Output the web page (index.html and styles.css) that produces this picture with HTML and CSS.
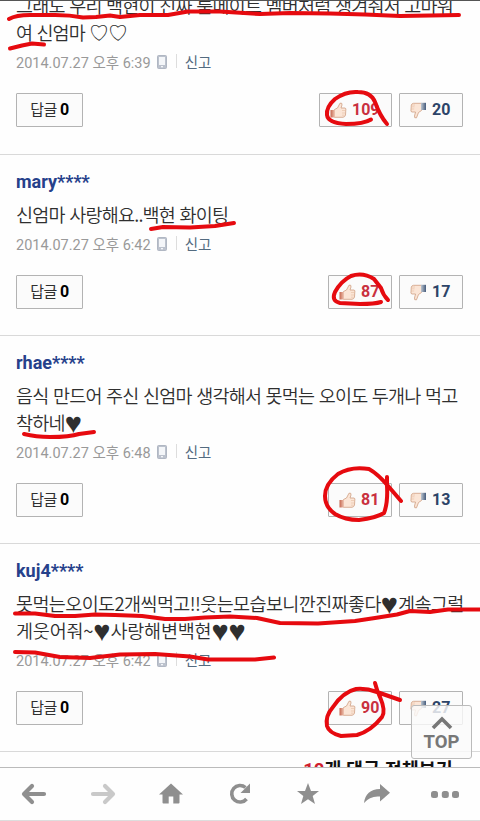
FILE: index.html
```html
<!DOCTYPE html>
<html lang="ko">
<head>
    <meta charset="utf-8">
    <title>댓글</title>
    <link rel="stylesheet" href="styles.css">
</head>
<body>
    <svg class="symbols" aria-hidden="true">
        <defs>
            <linearGradient id="cuffRed"><stop offset="0" stop-color="#c5654e"/><stop offset="1" stop-color="#efc7b4"/></linearGradient>
            <linearGradient id="cuffBlue"><stop offset="0" stop-color="#bdc6d0"/><stop offset="1" stop-color="#455b7c"/></linearGradient>
            <symbol id="up" viewBox="0 0 17 17">
                <path d="M4.500 7.500L7.500 6L10 1.200Q12.500.500 12 3L11 6H15Q16.500 6.500 15.800 8L15.500 13Q15 15 13 15.300H4.500Z" fill="#fbe5d6" stroke="#cfa083" stroke-width=".8"/>
                <path d="M12 8.500h3.500M12 11h3.300M12 13.200h2.500" stroke="#e5bda3" stroke-width=".6"/>
                <path d="M.5 8H5V15.500H.5Z" fill="url(#cuffRed)"/>
            </symbol>
            <symbol id="down" viewBox="0 0 17 17">
                <path d="M11.500 8.500L8.500 10.500L6.500 15.800Q4 16.500 4.500 14L5.500 10H2Q.400 9.500 1 8L1.300 3Q2 1.300 3.500 1.300H11.500Z" fill="#fbe5d6" stroke="#cfa083" stroke-width=".8"/>
                <path d="M1.200 7h3M1.500 4.800h3M2 3h3" stroke="#e5bda3" stroke-width=".6"/>
                <path d="M11 .8H16V8H11Z" fill="url(#cuffBlue)"/>
            </symbol>
            <symbol id="phone" viewBox="0 0 10 14">
                <rect x=".5" y=".5" width="9" height="13" rx="1" fill="#bcc2cd" stroke="#b0b7c3"/>
                <rect x="2" y="2" width="6" height="8" fill="#f4f6f9"/>
                <rect x="4" y="11" width="2" height="1.300" fill="#f4f6f9"/>
            </symbol>
        </defs>
    </svg>

    <main class="comments">
        <article class="comment first">
            <p class="text"><span class="spaced">그래도 우리 백현이 진짜 룸메이트 멤버처럼 챙겨줘서 고마워</span><br>여 신엄마 <span class="heart-line">♡♡</span></p>
            <div class="meta"><span class="date">2014.07.27 오후 6:39</span><svg class="phone"><use href="#phone"/></svg><a class="report">신고</a></div>
            <div class="actions">
                <button class="reply">답글 <b>0</b></button>
                <button class="vote good wide"><svg><use href="#up"/></svg>109</button>
                <button class="vote bad"><svg><use href="#down"/></svg>20</button>
            </div>
        </article>
        <article class="comment">
            <h2 class="name">mary****</h2>
            <p class="text"><span class="spaced">신엄마 사랑해요..백현 화이팅</span></p>
            <div class="meta"><span class="date">2014.07.27 오후 6:42</span><svg class="phone"><use href="#phone"/></svg><a class="report">신고</a></div>
            <div class="actions">
                <button class="reply">답글 <b>0</b></button>
                <button class="vote good"><svg><use href="#up"/></svg>87</button>
                <button class="vote bad"><svg><use href="#down"/></svg>17</button>
            </div>
        </article>
        <article class="comment">
            <h2 class="name">rhae****</h2>
            <p class="text"><span class="spaced">음식 만드어 주신 신엄마 생각해서 못먹는 오이도 두개나 먹고</span><br><span class="spaced">착하네<span class="heart">♥</span></span></p>
            <div class="meta"><span class="date">2014.07.27 오후 6:48</span><svg class="phone"><use href="#phone"/></svg><a class="report">신고</a></div>
            <div class="actions">
                <button class="reply">답글 <b>0</b></button>
                <button class="vote good"><svg><use href="#up"/></svg>81</button>
                <button class="vote bad"><svg><use href="#down"/></svg>13</button>
            </div>
        </article>
        <article class="comment">
            <h2 class="name">kuj4****</h2>
            <p class="text"><span class="wider">못먹는오이도2개씩먹고!!웃는모습보니깐진짜좋다<span class="heart">♥</span>계속그럴</span><br><span class="widest">게웃어줘~<span class="heart">♥</span>사랑해변백현<span class="heart">♥♥</span></span></p>
            <div class="meta"><span class="date">2014.07.27 오후 6:42</span><svg class="phone"><use href="#phone"/></svg><a class="report">신고</a></div>
            <div class="actions">
                <button class="reply">답글 <b>0</b></button>
                <button class="vote good"><svg><use href="#up"/></svg>90</button>
                <button class="vote bad"><svg><use href="#down"/></svg>27</button>
            </div>
        </article>
        <a class="more"><em>10</em>개 댓글 전체보기 ›</a>
    </main>

    <nav class="toolbar">
        <svg viewBox="0 0 28 24"><path d="M12 4L4 12L12 20M4.500 12H24" fill="none" stroke="#8f8f8f" stroke-width="4.200" stroke-linecap="round" stroke-linejoin="round"/></svg>
        <svg viewBox="0 0 28 24"><path d="M16 4L24 12L16 20M23.500 12H4" fill="none" stroke="#c9c9c9" stroke-width="4.200" stroke-linecap="round" stroke-linejoin="round"/></svg>
        <svg viewBox="0 0 28 24"><path d="M14 1.500L26 12.500H22.500V20.500Q22.500 21.500 21.500 21.500H16.300V14.500H11.700V21.500H6.500Q5.500 21.500 5.500 20.500V12.500H2Z" fill="#8f8f8f"/></svg>
        <svg viewBox="0 0 28 24"><path d="M19.500 5.500A8.300 8.300 0 1 0 20.500 17" fill="none" stroke="#8f8f8f" stroke-width="3.600"/><path d="M24 1.500V11H14.500Z" fill="#8f8f8f"/></svg>
        <svg viewBox="0 0 28 24"><path d="M14 1L17 9H25L18.700 14L21 22L14 17.300L7 22L9.300 14L3 9H11Z" fill="#8f8f8f"/></svg>
        <svg viewBox="0 0 28 24"><path d="M17 2L27 10.800L17 19.500V14.500Q7 13.500 1 21Q2.500 7.500 17 7Z" fill="#8f8f8f"/></svg>
        <svg viewBox="0 0 28 24"><g fill="#8f8f8f"><rect x="0" y="9" width="7" height="7" rx="2.500"/><rect x="10.800" y="9" width="7" height="7" rx="2.500"/><rect x="21" y="9" width="7" height="7" rx="2.500"/></g></svg>
    </nav>

    <a class="top">
        <svg viewBox="0 0 22 14"><path d="M2 12L11 3L20 12" fill="none" stroke="#777" stroke-width="3.600"/></svg>
        TOP
    </a>

    <!-- red pen marks -->
    <svg class="marker" viewBox="0 0 480 821">
        <path d="M9 19Q16 15 30 15H55Q70 15 83 17.500L96 17L110 15.500L120 17L140 15L168 15L188 11.500H220L260 14L290 13L330 13.500L365 14.500L400 16L430 15.500L459 15"/>
        <path d="M10 48.500L22 45.500L32 43.500L44 44.500"/>
        <path d="M151 229L163 227L190 227.500L215 226L234 223"/>
        <path d="M24 434Q36 437 50 437Q70 437 79 434L94 432"/>
        <path d="M15 613.500L35 613.500L55 616L75 616L95 614.500L115 615L142 616L165 619H185L205 617.500L230 616.500L257 618L280 623L318 623.500L355 621L375 618L397 614.500L410 611L430 612L448 609.500H480"/>
        <path d="M15 652L35 652.500L60 657L90 658L120 654.500L155 654L190 656.500L208 659.500H255L274 657.500"/>
        <path d="M371 119.500Q364 124 346 124Q328 123 327 115Q326 107 335 99Q346 91 358 92Q371 92 375 102Q380 116 387 124"/>
        <path d="M381 302Q375 304 360 304L340 303Q331 301 335 292Q341 281 351 276Q363 272 374 279L381 288Q383 295 388 300"/>
        <path d="M387 477V486Q388 503 384 513Q376 518 359 520Q345 520 335 514Q325 507 325 496Q325 484 338 474Q351 466 369 469Q378 474 389 487L401 501"/>
        <path d="M375 683Q377 691 380 697Q386 711 382 717Q371 731 357 735L341 736Q329 733 327 726Q325 716 333 707Q343 692 356 689Q366 688 377 692L400 700"/>
    </svg>
</body>
</html>
```
FILE: styles.css
```css
* {
    box-sizing: border-box;
}
body {
    position: relative;
    display: flex;
    flex-direction: column;
    height: 821px;
    margin: 0;
    overflow: hidden;
    background-color: #fefefe;
    font-family: Roboto, "Noto Sans CJK KR", sans-serif;
    color: #2f2f2f;
}
.symbols {
    position: absolute;
    width: 0;
    height: 0;
}
.comments {
    height: 767px;
    overflow: hidden;
    border-top: 1px solid #555;
}
.comment {
    padding: 17px 17px 26px 16px;
    border-top: 1px solid #d9d9d9;
}
.comment.first {
    margin-top: -9px;
    padding-top: 0;
    padding-bottom: 27px;
    border-top: none;
}
.name {
    margin: 0 0 9px;
    font-size: 18px;
    line-height: 20px;
    font-weight: bold;
    color: #26418b;
}
.text {
    margin: 0;
    font-size: 18.5px;
    line-height: 27px;
    font-weight: 350;
    white-space: nowrap;
    letter-spacing: -0.9px;
    font-family: "Noto Sans CJK KR", sans-serif;
}
.spaced {
    letter-spacing: -0.77px;
}
.wider {
    letter-spacing: -0.6px;
}
.widest {
    letter-spacing: -0.2px;
}
.heart,
.heart-line {
    font-family: "DejaVu Sans", sans-serif;
    font-size: 20px;
    line-height: 20px;
}
.heart {
    font-size: 29px;
    letter-spacing: 0;
    vertical-align: -3px;
}
.meta {
    display: flex;
    align-items: center;
    height: 20px;
    margin-top: 5px;
    font-size: 14.5px;
    color: #999;
    white-space: nowrap;
}
.phone {
    width: 10px;
    height: 14px;
    margin: 2px 9px 0 6px;
}
.report {
    display: flex;
    align-items: center;
    height: 20px;
    font-size: 14.5px;
    color: #536b80;
}
.report::before {
    content: "";
    height: 14px;
    margin-right: 8px;
    border-left: 1px solid #ddd;
}
.actions {
    display: flex;
    margin-top: 22px;
}
button {
    height: 34px;
    padding: 0 0 2px;
    border: 1px solid #b3b3b3;
    border-radius: 1px;
    background-color: #fbfbfb;
    font-family: inherit;
    font-size: 16px;
}
.reply {
    width: 67px;
    padding-bottom: 4px;
    margin-right: auto;
    font-size: 15px;
    letter-spacing: -0.5px;
    color: #2f2f2f;
}
.reply b {
    font-size: 16px;
    color: #000;
}
.vote {
    display: flex;
    align-items: center;
    width: 64px;
    padding-left: 10px;
    font-weight: bold;
}
.vote.wide {
    width: 73px;
}
.vote svg {
    width: 17px;
    height: 17px;
    margin: 2px 5px 0 0;
}
.good {
    margin-right: 7px;
    color: #c9303e;
}
.bad {
    color: #2d4468;
}
.more {
    display: block;
    padding: 6px 17px 0 0;
    border-top: 1px solid #d9d9d9;
    font-size: 18.5px;
    line-height: 25px;
    font-weight: bold;
    text-align: right;
    color: #111;
}
.more em {
    font-style: normal;
    color: #d0202e;
}
.toolbar {
    display: flex;
    align-items: center;
    justify-content: space-between;
    height: 54px;
    padding: 0 21px 0 20px;
    border-top: 1px solid #bbb;
    border-bottom: 1px solid #ddd;
    background-color: #fefefe;
}
.toolbar svg {
    width: 28px;
    height: 24px;
}
.top {
    position: absolute;
    left: 411px;
    top: 705px;
    display: flex;
    flex-direction: column;
    align-items: center;
    width: 61px;
    height: 54px;
    padding-top: 10px;
    border: 1px solid #bbb;
    border-radius: 3px;
    background-color: rgba(250, 250, 250, 0.82);
    font-size: 18.5px;
    line-height: 22px;
    font-weight: bold;
    color: #777;
}
.top svg {
    width: 22px;
    height: 14px;
    margin-bottom: 1px;
}
.marker {
    position: absolute;
    left: 0;
    top: 0;
    width: 480px;
    height: 821px;
    pointer-events: none;
    fill: none;
    stroke: #e60a0f;
    stroke-width: 4;
    stroke-linecap: round;
    stroke-linejoin: round;
}
```
